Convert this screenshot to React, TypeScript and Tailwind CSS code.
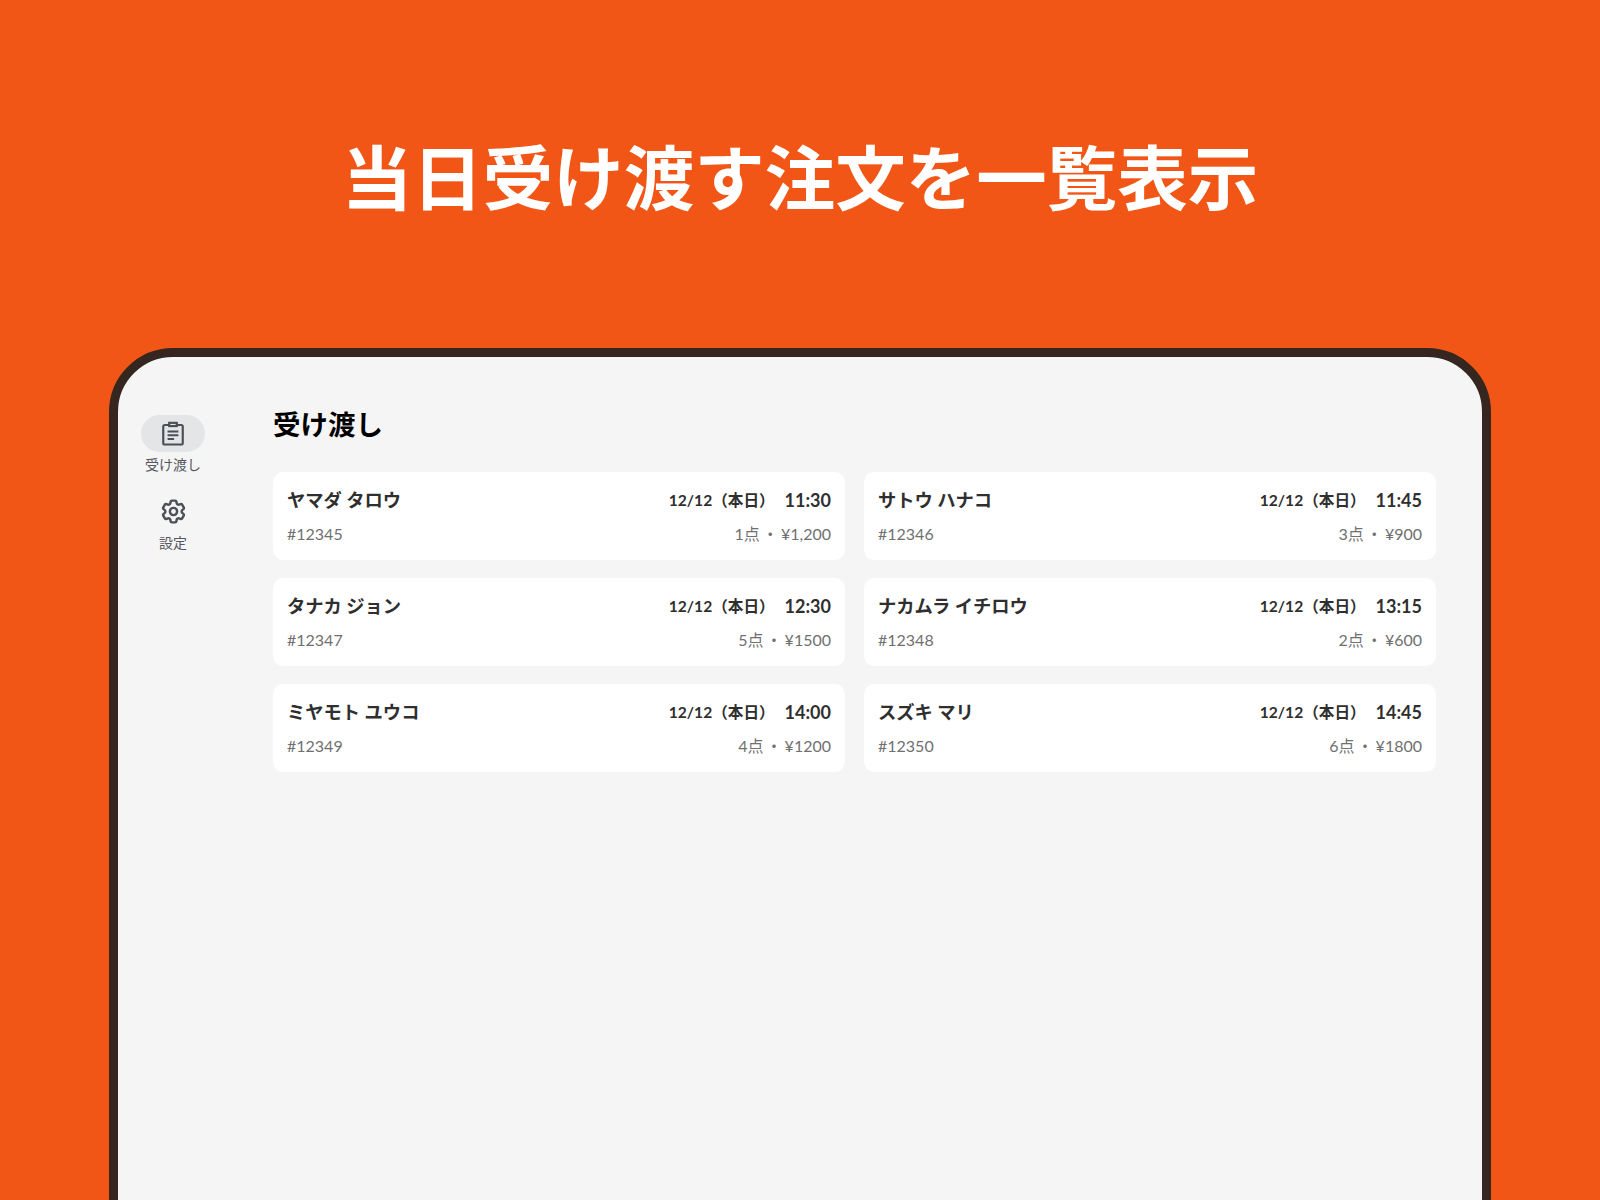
import { HiOutlineCog6Tooth } from "react-icons/hi2";

const orders = [
  { name: "ヤマダ タロウ", time: "11:30", id: "#12345", summary: "1点 ・ ¥1,200" },
  { name: "サトウ ハナコ", time: "11:45", id: "#12346", summary: "3点 ・ ¥900" },
  { name: "タナカ ジョン", time: "12:30", id: "#12347", summary: "5点 ・ ¥1500" },
  { name: "ナカムラ イチロウ", time: "13:15", id: "#12348", summary: "2点 ・ ¥600" },
  { name: "ミヤモト ユウコ", time: "14:00", id: "#12349", summary: "4点 ・ ¥1200" },
  { name: "スズキ マリ", time: "14:45", id: "#12350", summary: "6点 ・ ¥1800" },
];

function ClipboardIcon() {
  return (
    <svg viewBox="0 0 24 24" className="h-[26px] w-[26px] text-[#4b4f57]" fill="none" stroke="currentColor" strokeWidth="2">
      <rect x="3" y="3.7" width="18" height="18" rx="1.5" />
      <rect x="8.5" y="1.7" width="7" height="3" fill="#e4e5e7" />
      <path d="M7 9.7h10M7 13.2h10M7 16.7h6" strokeWidth="1.8" />
    </svg>
  );
}

export default function App() {
  return (
    <div className="h-[1200px] overflow-hidden bg-[#f25616] font-['Lato','Noto_Sans_CJK_JP',sans-serif]">
      <h1 className="flex h-[348px] justify-center pt-[132px] text-[70.5px] leading-[92px] font-bold text-white">
        当日受け渡す注文を一覧表示
      </h1>
      <div className="mx-[109px] flex h-[900px] rounded-t-[64px] border-[9px] border-[#35271f] bg-[#f5f5f5]">
        <nav className="flex w-[110px] shrink-0 flex-col items-center pt-[58px]">
          <div className="flex h-[37px] w-[64px] items-center justify-center rounded-full bg-[#e4e5e7]">
            <ClipboardIcon />
          </div>
          <span className="mt-[3px] text-[14px] leading-[20px] text-[#55585e]">受け渡し</span>
          <div className="mt-[18px] flex h-[36px] items-center justify-center text-[#4b4f57]">
            <HiOutlineCog6Tooth size={29} strokeWidth={2} />
          </div>
          <span className="mt-[4px] text-[14px] leading-[20px] text-[#55585e]">設定</span>
        </nav>
        <main className="flex-1 pt-[50px] pr-[46px] pl-[45px]">
          <h2 className="text-[27.5px] leading-[36px] font-bold text-black">受け渡し</h2>
          <div className="mt-[29px] grid grid-cols-2 gap-x-[19px] gap-y-[18px]">
            {orders.map((order) => (
              <div key={order.id} className="h-[88px] rounded-[10px] bg-white px-[14px] pt-[15px]">
                <div className="flex h-[26px] items-center justify-between text-[#2f2f2f]">
                  <span className="text-[18.3px] leading-[26px] font-bold">{order.name}</span>
                  <span className="flex items-center gap-[10px] font-bold">
                    <span className="pt-[2px] text-[15.6px]">12/12（本日）</span>
                    <span className="text-[18px]">{order.time}</span>
                  </span>
                </div>
                <div className="mt-[9px] flex items-center justify-between text-[16px] leading-[24px] text-[#707070]">
                  <span>{order.id}</span>
                  <span className="[word-spacing:-1.5px]">{order.summary}</span>
                </div>
              </div>
            ))}
          </div>
        </main>
      </div>
    </div>
  );
}
